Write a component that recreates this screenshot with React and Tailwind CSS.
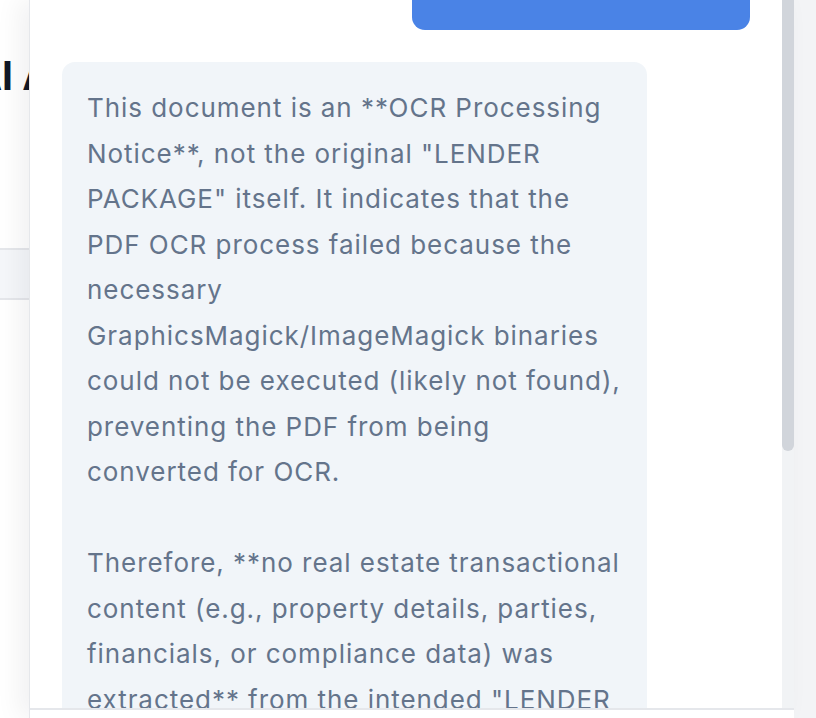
const reply = `This document is an **OCR Processing Notice**, not the original "LENDER PACKAGE" itself. It indicates that the PDF OCR process failed because the necessary GraphicsMagick/ImageMagick binaries could not be executed (likely not found), preventing the PDF from being converted for OCR.

Therefore, **no real estate transactional content (e.g., property details, parties, financials, or compliance data) was extracted** from the intended "LENDER PACKAGE" document.`;

function Scrollbar() {
  return (
    <div className="w-[12px] shrink-0 bg-[#f1f3f5]">
      <div className="h-[451px] rounded-b-full bg-[#d1d5db]" />
    </div>
  );
}

function ChatPanel() {
  return (
    <aside className="absolute top-0 bottom-0 left-[29px] right-[22px] flex flex-col border-l border-[#e5e7eb] bg-white shadow-[-10px_0_24px_rgba(15,23,42,0.06)]">
      <div className="flex min-h-0 flex-1">
        <div className="flex-1 overflow-hidden px-[32px]">
          <div className="flex justify-end">
            <div className="mt-[-70px] h-[100px] w-[338px] rounded-[13px] bg-[#4a83e6]" />
          </div>
          <div className="mt-[32px] w-[85%] rounded-[13px] bg-[#f1f5f9] pl-[25px] pr-[21px] pt-[23px] pb-[26px]">
            <p className="whitespace-pre-wrap text-[26px] leading-[45.5px] tracking-[0.95px] text-[#64748b]">
              {reply}
            </p>
          </div>
        </div>
        <Scrollbar />
      </div>
      <div className="h-[10px] shrink-0 border-t-2 border-[#e5e7eb] bg-white" />
    </aside>
  );
}

export default function App() {
  return (
    <div className="relative flex h-[718px] w-[816px] overflow-hidden bg-white font-['Inter','Noto_Sans',sans-serif]">
      <main className="flex-1 bg-white">
        <h1 className="ml-[-27px] whitespace-nowrap pt-[56px] text-[39px] font-bold leading-[1] text-[#111827]">
          AI Assistant
        </h1>
        <div className="mt-[153px] h-[52px] border-y-2 border-[#e5e7eb] bg-[#f5f7fa]" />
      </main>
      <div className="w-[22px] shrink-0 bg-[#f3f4f6]" />
      <ChatPanel />
    </div>
  );
}
